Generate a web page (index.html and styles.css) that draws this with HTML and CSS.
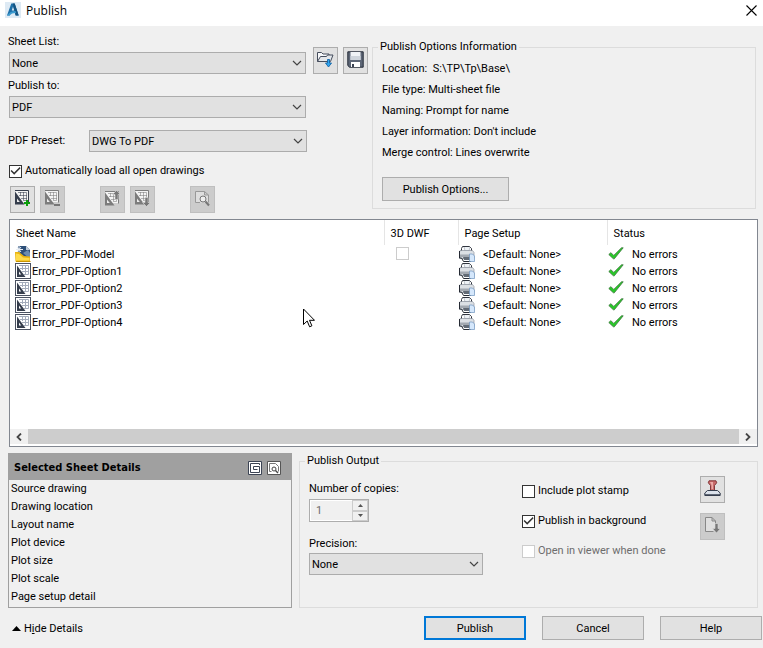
FILE: index.html
```html
<!DOCTYPE html>
<html lang="en">
<head>
    <meta charset="UTF-8">
    <meta name="viewport" content="width=device-width, initial-scale=1.0">
    <title>Publish</title>
    <link rel="stylesheet" href="styles.css">
</head>
<body>
    <!-- shared icons -->
    <svg class="sprite" aria-hidden="true">
        <symbol id="chevron" viewBox="0 0 10 6">
            <path d="M1 1l4 4 4-4" fill="none" stroke="#444" stroke-width="1.2"/>
        </symbol>
        <symbol id="sheet" viewBox="0 0 16 16">
            <path d="M1 0h13v12H3z" fill="#f4f4f4"/>
            <path d="M1 .5h13.500v12" fill="none" stroke="currentColor"/>
            <path d="M4 2.500h8.500v8H9M6.500 2v4M9.500 2v8M5 5.500h8M7 8.500h6" fill="none" stroke="currentColor" stroke-opacity=".55"/>
            <path d="M1 1.500v13h9.500z" fill="currentColor"/>
            <path d="M3 8.500v3.500h2.800z" fill="#eee"/>
        </symbol>
        <symbol id="layout" viewBox="0 0 16 16">
            <rect x=".5" y=".5" width="15" height="15" fill="#fff" stroke="#4b5261"/>
            <path d="M4 2.500h9.500v9H9M7.500 2v5M10.500 2v9M5 5.500h8M7 8.500h6" fill="none" stroke="#a3abba"/>
            <path d="M2 2.500v11.500h8.500z" fill="#353d4c"/>
            <path d="M4 8.500v3h2.200z" fill="#fff"/>
        </symbol>
        <symbol id="model" viewBox="0 0 16 16">
            <path d="M3 0h8l4 4v9H3z" fill="#2d4f78"/>
            <path d="M11 0v4h4z" fill="#c3cedb"/>
            <path d="M8 7l5-3 2 3v6z" fill="#6b8cae"/>
            <path d="M4 0v7M1 3.500h7M2 1l4 5M6 1L2 6" stroke="#e8eef5"/>
            <path d="M0 6l4 0 5 4 6 .5v5H.5z" fill="#eab40f"/>
            <path d="M1 7.500l3 .5 4 3.500 6.500.5v2.500H1z" fill="#ffdc4a"/>
            <path d="M1 15.500h14.500" stroke="#c79300"/>
        </symbol>
        <symbol id="printer" viewBox="0 0 16 16">
            <path d="M2.500 5V2.500l1-2h7l2 2V5" fill="#fff" stroke="#30353f"/>
            <path d="M5 1l1 4h4l1-4" fill="#eef2f6" stroke="#a7afb9" stroke-width=".7"/>
            <path d="M1 4.500h12.500l1.500 2v6H.5v-6z" fill="#dce0e5" stroke="#7b828d" stroke-width=".6"/>
            <path d="M.5 8.500h14v2.500H.5z" fill="#a3a9b1"/>
            <path d="M.5 5v7h2l2 3.500h7.500" fill="none" stroke="#252a33"/>
            <path d="M4 11h7v3H5z" fill="#636b76"/>
            <path d="M10.500 8h3l2 2v5.500h-5z" fill="#d5e7fb" stroke="#6f93bd" stroke-width=".7"/>
        </symbol>
        <symbol id="ok" viewBox="0 0 16 13">
            <path d="M.8 7.500l2-1.800 3 2.700L13.500.8h1.700L6.300 11.800h-.9z" fill="#27ca27" stroke="#3c713c" stroke-width=".8"/>
        </symbol>
    </svg>

    <header class="titlebar">
        <svg class="logo" viewBox="0 0 16 16" aria-hidden="true">
            <rect width="16" height="16" fill="#deeaf4"/>
            <path d="M6.300 1.500h3.400l4 12h-3l-.9-2.700-4-.1-.9 2.800H2z" fill="#1d6fa8"/>
            <path d="M8 4.500l1.200 4H6.800z" fill="#deeaf4"/>
            <path d="M9.700 1.500l4 12h-3l-3-12z" fill="#155482"/>
            <path d="M2 13.500c2.500-3.200 5-4.300 8.500-4.500l.5 2c-3 0-5 .8-6.600 2.500z" fill="#3b9bd0"/>
        </svg>
        <h1>Publish</h1>
        <button type="button" class="close" aria-label="Close">
            <svg width="11" height="11" viewBox="0 0 11 11"><path d="M.5.5l10 10M10.500.5l-10 10" stroke="#000" stroke-width="1.100"/></svg>
        </button>
    </header>

    <main class="dialog">
        <section class="setup">
            <div class="setup-fields">
                <div class="list-row">
                    <div class="field">
                        <label for="sheet-list">Sheet List:</label>
                        <div class="combo">
                            <select id="sheet-list"><option>None</option></select>
                            <svg><use href="#chevron"/></svg>
                        </div>
                    </div>
                    <button type="button" class="tool" aria-label="Load sheet list">
                        <svg viewBox="0 0 17 17">
                            <path d="M.5 10.500v-9h4l1.500 1.500h6v2.500" fill="#f7f8fa" stroke="#454d5c"/>
                            <path d="M.5 10.500l3-5h6l1-1.500h5.500l-2.500 6.500z" fill="#e4e7eb" stroke="#454d5c"/>
                            <path d="M10.500 8.500h2v3.500h2l-3 4-3-4h2z" fill="#2fa5f0" stroke="#1464a5" stroke-width=".9"/>
                        </svg>
                    </button>
                    <button type="button" class="tool" aria-label="Save sheet list">
                        <svg viewBox="0 0 17 17">
                            <path d="M.8.8h15.400v15.400H2.500L.8 14.500z" fill="#5d6676" stroke="#252c38"/>
                            <path d="M3.500 1h10v8h-10z" fill="#f0f3f6"/>
                            <path d="M3.500 5h10v4h-10z" fill="#cfd5dc"/>
                            <path d="M4 11h9v5H4z" fill="#fff"/>
                            <path d="M5 13h2v3H5z" fill="#3a4352"/>
                        </svg>
                    </button>
                </div>
                <div class="field publish-to">
                    <label for="publish-to">Publish to:</label>
                    <div class="combo">
                        <select id="publish-to"><option>PDF</option></select>
                        <svg><use href="#chevron"/></svg>
                    </div>
                </div>
                <div class="preset">
                    <label for="preset">PDF Preset:</label>
                    <div class="combo">
                        <select id="preset"><option>DWG To PDF</option></select>
                        <svg><use href="#chevron"/></svg>
                    </div>
                </div>
                <label class="check"><input type="checkbox" checked>Automatically load all open drawings</label>
                <div class="toolbar">
                    <button type="button" class="tool" aria-label="Add sheets">
                        <svg viewBox="0 0 17 17"><use href="#sheet" width="16" height="16"/><path d="M13 10v6M10 13h6" stroke="#0a9d0a" stroke-width="2"/></svg>
                    </button>
                    <button type="button" class="tool" aria-label="Remove sheets" disabled>
                        <svg viewBox="0 0 17 17"><use href="#sheet" width="16" height="16"/><path d="M10 15h6" stroke="#777" stroke-width="2"/></svg>
                    </button>
                    <button type="button" class="tool group-start" aria-label="Move sheet up" disabled>
                        <svg viewBox="0 0 17 17"><use href="#sheet" y="1" width="16" height="16"/><path d="M12.500.5l4 4h-2.500v5h-3v-5H8.500z" fill="#777" stroke="#ddd" stroke-width=".6"/></svg>
                    </button>
                    <button type="button" class="tool" aria-label="Move sheet down" disabled>
                        <svg viewBox="0 0 17 17"><use href="#sheet" width="16" height="16"/><path d="M12.500 16.500l4-4h-2.500v-5h-3v5H8.500z" fill="#777" stroke="#ddd" stroke-width=".6"/></svg>
                    </button>
                    <button type="button" class="tool group-start" aria-label="Preview" disabled>
                        <svg viewBox="0 0 17 17">
                            <path d="M6 12.500H1.500v-11h9l4 3.500v7.500M10.500 1.500v3.500h4" fill="#dedede" stroke="#999"/>
                            <circle cx="9" cy="9" r="3" fill="#eee" stroke="#777"/>
                            <path d="M11.500 11.500l3.500 4" stroke="#777" stroke-width="2"/>
                        </svg>
                    </button>
                </div>
            </div>

            <fieldset class="info">
                <legend>Publish Options Information</legend>
                <p>Location:&nbsp; S:\TP\Tp\Base\</p>
                <p>File type: Multi-sheet file</p>
                <p>Naming: Prompt for name</p>
                <p>Layer information: Don't include</p>
                <p>Merge control: Lines overwrite</p>
                <button type="button" class="btn options">Publish Options...</button>
            </fieldset>
        </section>

        <section class="sheets">
            <table>
                <thead>
                    <tr>
                        <th class="col-name">Sheet Name</th>
                        <th class="col-dwf">3D DWF</th>
                        <th class="col-setup">Page Setup</th>
                        <th>Status</th>
                    </tr>
                </thead>
                <tbody>
                    <tr>
                        <td><span class="cell"><svg><use href="#model"/></svg><span>Error_PDF-Model</span></span></td>
                        <td><input type="checkbox" class="dwf" aria-label="3D DWF" disabled></td>
                        <td><span class="cell wide"><svg><use href="#printer"/></svg><span>&lt;Default: None&gt;</span></span></td>
                        <td><span class="cell wide"><svg class="ok"><use href="#ok"/></svg><span>No errors</span></span></td>
                    </tr>
                    <tr>
                        <td><span class="cell"><svg><use href="#layout"/></svg><span>Error_PDF-Option1</span></span></td>
                        <td></td>
                        <td><span class="cell wide"><svg><use href="#printer"/></svg><span>&lt;Default: None&gt;</span></span></td>
                        <td><span class="cell wide"><svg class="ok"><use href="#ok"/></svg><span>No errors</span></span></td>
                    </tr>
                    <tr>
                        <td><span class="cell"><svg><use href="#layout"/></svg><span>Error_PDF-Option2</span></span></td>
                        <td></td>
                        <td><span class="cell wide"><svg><use href="#printer"/></svg><span>&lt;Default: None&gt;</span></span></td>
                        <td><span class="cell wide"><svg class="ok"><use href="#ok"/></svg><span>No errors</span></span></td>
                    </tr>
                    <tr>
                        <td><span class="cell"><svg><use href="#layout"/></svg><span>Error_PDF-Option3</span></span></td>
                        <td></td>
                        <td><span class="cell wide"><svg><use href="#printer"/></svg><span>&lt;Default: None&gt;</span></span></td>
                        <td><span class="cell wide"><svg class="ok"><use href="#ok"/></svg><span>No errors</span></span></td>
                    </tr>
                    <tr>
                        <td><span class="cell"><svg><use href="#layout"/></svg><span>Error_PDF-Option4</span></span></td>
                        <td></td>
                        <td><span class="cell wide"><svg><use href="#printer"/></svg><span>&lt;Default: None&gt;</span></span></td>
                        <td><span class="cell wide"><svg class="ok"><use href="#ok"/></svg><span>No errors</span></span></td>
                    </tr>
                </tbody>
            </table>
            <div class="scrollbar">
                <button type="button" aria-label="Scroll left"><svg viewBox="0 0 6 8"><path d="M5 .5L1.500 4 5 7.500" fill="none" stroke="#444" stroke-width="1.800"/></svg></button>
                <div class="thumb"></div>
                <button type="button" aria-label="Scroll right"><svg viewBox="0 0 6 8"><path d="M1 .5L4.500 4 1 7.500" fill="none" stroke="#444" stroke-width="1.800"/></svg></button>
            </div>
            <svg class="pointer" viewBox="0 0 12 20" aria-hidden="true">
                <path d="M.5 1v15.500l3.700-3.500 2.400 5.800 2.300-1-2.400-5.500h5z" fill="#fff" stroke="#000"/>
            </svg>
        </section>

        <section class="bottom">
            <div class="details">
                <div class="details-head">
                    <h2>Selected Sheet Details</h2>
                    <button type="button" aria-label="Page setup">
                        <svg viewBox="0 0 14 14"><path d="M.5.5h13v13H.5z" fill="#fff" stroke="#3c4454"/><path d="M11.500 4V2.500h-9v9h9v-6h-6v3h4" fill="none" stroke="#3c4454"/></svg>
                    </button>
                    <button type="button" aria-label="Preview sheet">
                        <svg viewBox="0 0 14 14"><path d="M.5.5h13v13H.5z" fill="#fff" stroke="#555"/><path d="M4.500 10.500h-2v-8h6l3 3v5" fill="none" stroke="#777"/><circle cx="7" cy="8" r="2" fill="#fff" stroke="#444"/><path d="M8.500 9.500l2.500 2.500" stroke="#444" stroke-width="1.400"/></svg>
                    </button>
                </div>
                <ul>
                    <li>Source drawing</li>
                    <li>Drawing location</li>
                    <li>Layout name</li>
                    <li>Plot device</li>
                    <li>Plot size</li>
                    <li>Plot scale</li>
                    <li>Page setup detail</li>
                </ul>
            </div>

            <fieldset class="output">
                <legend>Publish Output</legend>
                <div class="output-grid">
                    <div class="numbers">
                        <label for="copies">Number of copies:</label>
                        <div class="spinner">
                            <input type="text" id="copies" value="1" disabled>
                            <div class="spin">
                                <button type="button" aria-label="More copies" disabled><svg viewBox="0 0 5 3"><path d="M0 3L2.500 0 5 3z" fill="#555"/></svg></button>
                                <button type="button" aria-label="Fewer copies" disabled><svg viewBox="0 0 5 3"><path d="M0 0l2.500 3L5 0z" fill="#555"/></svg></button>
                            </div>
                        </div>
                        <label for="precision">Precision:</label>
                        <div class="combo">
                            <select id="precision"><option>None</option></select>
                            <svg><use href="#chevron"/></svg>
                        </div>
                    </div>
                    <div class="checks">
                        <label class="check"><input type="checkbox">Include plot stamp</label>
                        <label class="check"><input type="checkbox" checked>Publish in background</label>
                        <label class="check off"><input type="checkbox" disabled>Open in viewer when done</label>
                    </div>
                    <div class="side">
                        <button type="button" class="tool" aria-label="Plot stamp settings">
                            <svg viewBox="0 0 17 17">
                                <path d="M5 .8h7l.7 2-2.200 2.700v5h-4v-5L4.300 2.800z" fill="#c76a6a" stroke="#7c2b2e" stroke-width=".9"/>
                                <path d="M6 2h3v7H7.500V5z" fill="#eba9a6"/>
                                <path d="M3.500 10.500h10l2.700 2.500v2.500H.8V13z" fill="#dbe1ea" stroke="#343c4c"/>
                                <path d="M1 15h15" stroke="#343c4c" stroke-width="1.500"/>
                            </svg>
                        </button>
                        <button type="button" class="tool" aria-label="Export page" disabled>
                            <svg viewBox="0 0 17 17">
                                <path d="M9.500 14.500h-8V.5h6.500l3.500 3.500v3M8 .5V4h3.500" fill="#dfdfdf" stroke="#888"/>
                                <path d="M11 6.500h3v5h2.500l-4 4.500-4-4.500H11z" fill="#777" stroke="#ddd" stroke-width=".6"/>
                            </svg>
                        </button>
                    </div>
                </div>
            </fieldset>
        </section>

        <footer class="actions">
            <button type="button" class="toggle"><svg viewBox="0 0 9 5"><path d="M0 5l4.500-5L9 5z"/></svg><span>H<u>i</u>de Details</span></button>
            <button type="submit" class="btn primary">Publish</button>
            <button type="button" class="btn">Cancel</button>
            <button type="button" class="btn">Help</button>
        </footer>
    </main>
</body>
</html>
```
FILE: styles.css
```css
* {
    margin: 0;
    padding: 0;
    box-sizing: border-box;
}

body {
    background: #f0f0f0;
    color: #000;
    font-family: Tahoma, Roboto, sans-serif;
    font-size: 11px;
    line-height: 16px;
}

button, input, select {
    font: inherit;
    color: inherit;
}

svg {
    display: block;
    flex: none;
}

.sprite {
    position: absolute;
    width: 0;
    height: 0;
}

/* title bar */
.titlebar {
    display: flex;
    align-items: center;
    height: 26px;
    padding: 0 6px 6px 5px;
    background: #fff;
}

.titlebar h1 {
    flex: 1;
    margin-left: 5px;
    padding-top: 2px;
    font-family: "Segoe UI", "Open Sans", sans-serif;
    font-size: 12px;
    font-weight: 400;
}

.logo {
    width: 16px;
    height: 16px;
}

.close {
    border: 0;
    background: none;
}

.dialog {
    padding: 8px 5px 8px 8px;
}

/* top area */
.setup {
    display: grid;
    grid-template-columns: 360fr 384fr;
    gap: 4px;
    padding-right: 2px;
}

.list-row {
    display: grid;
    grid-template-columns: 1fr 25px 25px;
    gap: 5px;
    align-items: end;
}

.field label {
    display: block;
    padding-bottom: 2px;
}

.list-row .field {
    margin-right: 2px;
}

.publish-to {
    margin: 4px 62px 12px 0;
}

.combo {
    display: grid;
    align-items: center;
    margin-left: 1px;
}

.combo select, .combo svg {
    grid-area: 1 / 1;
}

.combo select {
    width: 100%;
    height: 22px;
    padding: 2px 20px 0 2px;
    border: 1px solid #acacac;
    border-radius: 0;
    background: #e1e1e1;
    appearance: none;
}

.combo svg {
    width: 10px;
    height: 6px;
    margin-right: 4px;
    justify-self: end;
    pointer-events: none;
}

.preset {
    display: grid;
    grid-template-columns: 80px 1fr;
    align-items: center;
    margin-right: 61px;
}

.check {
    display: flex;
    align-items: center;
    gap: 3px;
}

.setup .check {
    margin: 11px 0 7px 1px;
}

input[type="checkbox"] {
    flex: none;
    width: 13px;
    height: 13px;
    border: 1px solid #333;
    background: #fff;
    appearance: none;
}

input[type="checkbox"]:checked::after {
    content: "";
    display: block;
    height: 11px;
    background: #333;
    clip-path: polygon(5% 50%, 14% 40%, 38% 64%, 88% 14%, 96% 24%, 38% 84%);
}

input[type="checkbox"]:disabled {
    border-color: #ccc;
}

.tool {
    display: grid;
    place-items: center;
    width: 25px;
    height: 27px;
    padding-bottom: 2px;
    border: 1px solid #adadad;
    background: #e1e1e1;
    color: #353d4c;
}

.tool svg {
    width: 17px;
    height: 17px;
}

.tool:disabled {
    border-color: #bfbfbf;
    background: #ccc;
    color: #7c7c7c;
}

.toolbar {
    display: flex;
    gap: 5px;
    margin-left: 2px;
}

.group-start {
    margin-left: 30px;
}

fieldset {
    min-width: 0;
    border: 1px solid #dcdcdc;
}

legend {
    margin-left: -4px;
    padding: 0 2px;
}

.info {
    align-self: start;
    margin-top: 5px;
    padding: 3px 9px 7px;
}

.info p {
    line-height: 21px;
}

.btn {
    width: 102px;
    height: 24px;
    padding-top: 1px;
    border: 1px solid #adadad;
    background: #e1e1e1;
}

.options {
    width: 127px;
    margin-top: 14px;
}

/* sheet list */
.sheets {
    position: relative;
    display: flex;
    flex-direction: column;
    min-height: 228px;
    margin: 6px 0 6px 1px;
    border: 1px solid #828790;
    background: #fff;
}

.sheets table {
    width: 100%;
    border-collapse: collapse;
    table-layout: fixed;
}

.sheets th {
    height: 25px;
    padding: 2px 0 0 6px;
    border-right: 1px solid #e5e5e5;
    font-weight: 400;
    text-align: left;
}

.sheets th:last-child {
    border-right: 0;
}

.sheets .col-name {
    width: 374px;
}

.sheets .col-dwf {
    width: 74px;
}

.sheets .col-setup {
    width: 149px;
}

.sheets td {
    height: 17px;
}

.cell {
    display: flex;
    align-items: center;
    gap: 1px;
    height: 17px;
    padding-left: 5px;
}

.cell span {
    padding-top: 2px;
}

.cell svg {
    width: 16px;
    height: 16px;
}

.cell .ok {
    height: 13px;
}

.wide {
    gap: 8px;
    padding-left: 1px;
}

.dwf {
    display: block;
    margin-left: 12px;
}

.scrollbar {
    display: flex;
    height: 17px;
    margin-top: auto;
    padding-bottom: 2px;
}

.scrollbar button {
    display: grid;
    place-items: center;
    width: 18px;
    border: 0;
    background: #f0f0f0;
}

.scrollbar button svg {
    width: 6px;
    height: 8px;
}

.thumb {
    flex: 1;
    background: #cdcdcd;
}

.pointer {
    position: absolute;
    top: 88px;
    left: 293px;
    width: 12px;
    height: 20px;
}

/* details and output */
.bottom {
    display: grid;
    grid-template-columns: 284fr 459fr;
    gap: 7px;
}

.details {
    padding-bottom: 1px;
    border: 1px solid #a0a0a0;
}

.details-head {
    display: flex;
    align-items: center;
    gap: 5px;
    height: 26px;
    padding: 1px 10px 0 5px;
    background: #a0a0a0;
}

.details-head h2 {
    flex: 1;
    font-family: Tahoma, "DejaVu Sans Condensed", sans-serif;
    font-size: 11px;
}

.details-head button {
    width: 14px;
    height: 14px;
    border: 0;
    background: none;
}

.details ul {
    list-style: none;
    padding-left: 2px;
}

.details li {
    line-height: 18px;
}

.output {
    padding: 7px 32px 0 9px;
}

.output-grid {
    display: grid;
    grid-template-columns: 213px 1fr 25px;
}

.numbers {
    padding-top: 5px;
}

.numbers > label {
    display: block;
}

.numbers .combo {
    width: 174px;
    margin: 1px 0 0;
}

.spinner {
    display: flex;
    width: 60px;
    height: 23px;
    margin: 2px 0 14px;
    border: 1px solid #adadad;
    box-shadow: inset 0 0 0 1px #fff;
}

.spinner input {
    width: 42px;
    padding-left: 6px;
    border: 0;
    background: none;
    color: #6d6d6d;
}

.spin {
    display: grid;
    flex: none;
    width: 16px;
    background: #ccc;
}

.spin button {
    display: grid;
    place-items: center;
    border: 1px solid #ccc;
    background: #f0f0f0;
}

.spin svg {
    width: 5px;
    height: 3px;
}

.checks {
    display: grid;
    gap: 14px;
    align-content: start;
    padding-top: 7px;
}

.off {
    color: #6d6d6d;
}

.side {
    display: grid;
    gap: 10px;
    align-content: start;
}

/* bottom buttons */
.actions {
    display: flex;
    gap: 16px;
    margin: 8px -4px 0 0;
}

.toggle {
    display: flex;
    align-items: center;
    gap: 3px;
    margin-right: auto;
    padding: 1px 0 0 4px;
    border: 0;
    background: none;
}

.toggle svg {
    width: 9px;
    height: 5px;
}

.primary {
    border: 2px solid #0078d7;
}
```
